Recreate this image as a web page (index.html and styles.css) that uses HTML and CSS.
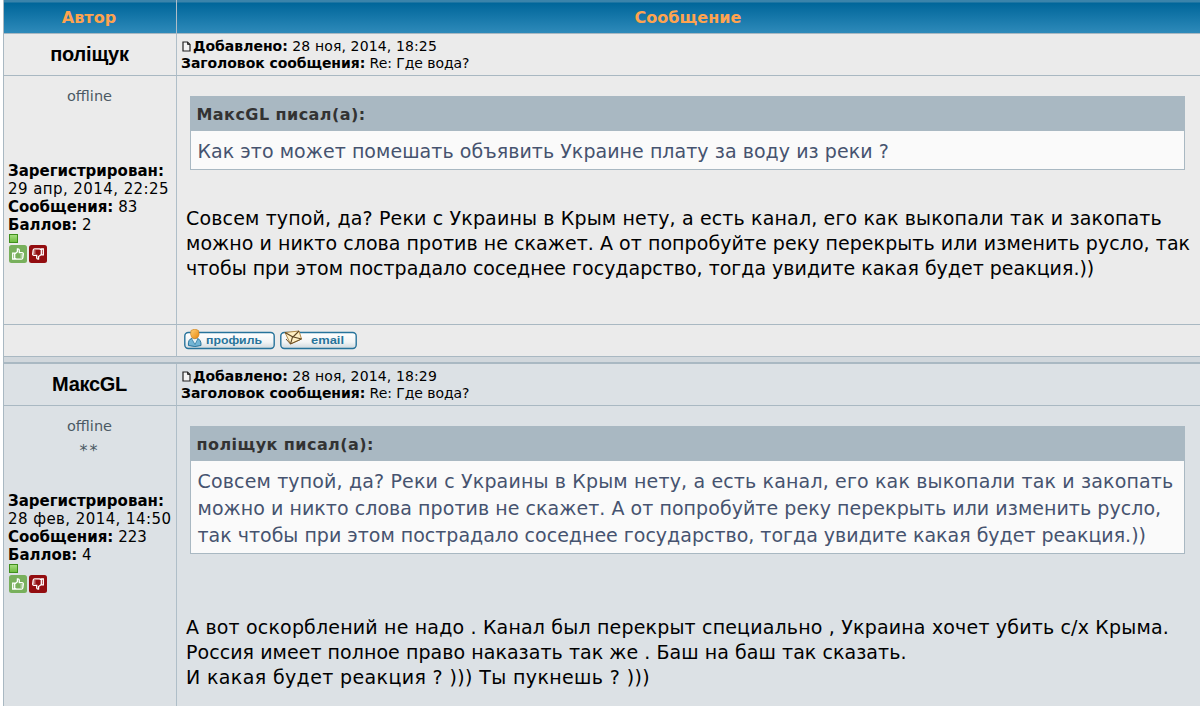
FILE: index.html
```html
<!DOCTYPE html>
<html lang="ru">
<head>
<meta charset="utf-8">
<title>Где вода?</title>
<link rel="stylesheet" href="styles.css">
</head>
<body>
<svg class="symbols" aria-hidden="true">
  <defs>
    <linearGradient id="btn" x1="0" y1="0" x2="0" y2="1"><stop offset="0" stop-color="#fff"/><stop offset=".6" stop-color="#f2f4f5"/><stop offset="1" stop-color="#cfd8dd"/></linearGradient>
    <linearGradient id="gold" x1="0" y1="0" x2="1" y2="1"><stop offset="0" stop-color="#ffd37a"/><stop offset="1" stop-color="#e8860c"/></linearGradient>
  </defs>
  <symbol id="page" viewBox="0 0 9 11"><path d="M1 1h4.500L8 3.500V10H1z" fill="#f4f4f4" stroke="#222" stroke-width="1.200"/><path d="M5.500 1v2.500H8" fill="none" stroke="#222" stroke-width=".9"/></symbol>
  <symbol id="up" viewBox="0 0 18 18"><rect width="18" height="18" rx="2.500" fill="#78b05c"/><path d="M3.700 8.200h2v5.800h-2zM5.700 9l2.700-2.300V4q1.900-.4 1.900 1.500v2.200h2.800q1.400.1 1.200 1.400l-.5 3.900q-.2 1.200-1.400 1.200H7.500l-1.800-.8" fill="none" stroke="#fff" stroke-width="1.300"/><path d="M11.500 10h2.500M11.500 12h2.200" stroke="#fff" stroke-width=".8"/></symbol>
  <symbol id="down" viewBox="0 0 18 18"><rect width="18" height="18" rx="2.500" fill="#930d10"/><path d="M3.700 4h2v5.800h-2zM5.700 9.500l2.700 2V14q1.900.4 1.900-1.500v-2.200h2.800q1.400-.1 1.200-1.400l-.5-3.900q-.2-1.200-1.400-1.200H7.500l-1.800.8" transform="translate(18) scale(-1 1)" fill="none" stroke="#fff" stroke-width="1.300"/><path d="M4 8h2.500M4.300 6h2.200" stroke="#fff" stroke-width=".8"/></symbol>
</svg>
<div class="topic">
  <div class="head author-head"><b>Автор</b></div>
  <div class="head message-head"><b>Сообщение</b></div>

  <div class="name a">поліщук</div>
  <div class="subject a">
    <div><svg class="page"><use href="#page"/></svg><b>Добавлено:</b> <span class="date">28 ноя, 2014, 18:25</span></div>
    <div class="title"><b>Заголовок сообщения:</b> <span>Re: Где вода?</span></div>
  </div>
  <div class="profile a">
    <div class="status"><div>offline</div></div>
    <div class="details">
      <div><b>Зарегистрирован:</b></div>
      <div class="when">29 апр, 2014, 22:25</div>
      <div><b>Сообщения:</b> 83</div>
      <div><b>Баллов:</b> 2</div>
    </div>
    <div class="rank"></div>
    <div class="votes"><svg><use href="#up"/></svg><svg><use href="#down"/></svg></div>
  </div>
  <div class="post a">
    <div class="quote">
      <div class="cite"><b>МаксGL писал(а):</b></div>
      <div class="quoted"><div class="tight">Как это может помешать объявить Украине плату за воду из реки ?</div></div>
    </div>
    <div class="text">
      <div class="loose">Совсем тупой, да? Реки с Украины в Крым нету, а есть канал, его как выкопали так и закопать</div>
      <div class="tight">можно и никто слова против не скажет. А от попробуйте реку перекрыть или изменить русло, так</div>
      <div>чтобы при этом пострадало соседнее государство, тогда увидите какая будет реакция.))</div>
    </div>
  </div>
  <div class="foot a"></div>
  <div class="foot a buttons">
    <svg width="92" height="22" viewBox="0 0 92 22">
      <rect x=".8" y="3.500" width="89.400" height="16" rx="3.500" fill="url(#btn)" stroke="#27739b" stroke-width="1.400"/>
      <path d="M4.500 16.500q-1-6 4-7.500h4q5 1.500 4.500 7.500-6 2-12.500 0z" fill="#73b5d5" stroke="#27739b"/><path d="M7.500 9.500l3.500 6 3-6" fill="#e6f2f7" stroke="#27739b" stroke-width=".7"/>
      <path d="M7 1.500q4-3 7.500 0 1.500 5-.7 7-3 2.500-6 0-2-3-.8-7z" fill="url(#gold)" stroke="#c77b1a" stroke-width=".6"/>
      <text x="22" y="15" textLength="56" lengthAdjust="spacingAndGlyphs">профиль</text>
    </svg>
    <svg width="78" height="22" viewBox="0 0 78 22">
      <rect x=".8" y="3.500" width="75.400" height="16" rx="3.500" fill="url(#btn)" stroke="#27739b" stroke-width="1.400"/>
      <path d="M5 3.500l14-1.500 2.500 8-11 5z" fill="#ffefc4" stroke="#b18a4b"/><path d="M5 3.500l8 4.500 6-6M10.500 15l2-7M21.500 10l-8-2" fill="none" stroke="#5e4523" stroke-width="1.100"/><path d="M6 10l4.500 5 11-5" fill="none" stroke="#6f5126"/>
      <text x="31" y="15" textLength="33" lengthAdjust="spacingAndGlyphs">email</text>
    </svg>
  </div>
  <div class="spacer"></div>

  <div class="name b">МаксGL</div>
  <div class="subject b">
    <div><svg class="page"><use href="#page"/></svg><b>Добавлено:</b> <span class="date">28 ноя, 2014, 18:29</span></div>
    <div class="title"><b>Заголовок сообщения:</b> <span>Re: Где вода?</span></div>
  </div>
  <div class="profile b">
    <div class="status"><div>offline</div><div class="stars">**</div></div>
    <div class="details">
      <div><b>Зарегистрирован:</b></div>
      <div class="when">28 фев, 2014, 14:50</div>
      <div><b>Сообщения:</b> 223</div>
      <div><b>Баллов:</b> 4</div>
    </div>
    <div class="rank"></div>
    <div class="votes"><svg><use href="#up"/></svg><svg><use href="#down"/></svg></div>
  </div>
  <div class="post b">
    <div class="quote">
      <div class="cite"><b>поліщук писал(а):</b></div>
      <div class="quoted">
        <div class="loose">Совсем тупой, да? Реки с Украины в Крым нету, а есть канал, его как выкопали так и закопать</div>
        <div class="tight">можно и никто слова против не скажет. А от попробуйте реку перекрыть или изменить русло,</div>
        <div>так чтобы при этом пострадало соседнее государство, тогда увидите какая будет реакция.))</div>
      </div>
    </div>
    <div class="text second">
      <div class="looser">А вот оскорблений не надо . Канал был перекрыт специально , Украина хочет убить с/х Крыма.</div>
      <div class="tight">Россия имеет полное право наказать так же . Баш на баш так сказать.</div>
      <div class="loosest">И какая будет реакция ? ))) Ты пукнешь ? )))</div>
    </div>
  </div>
</div>
</body>
</html>
```
FILE: styles.css
```css
* { box-sizing: border-box; }
body { margin: 0; background: #fff; font-family: "DejaVu Sans", Verdana, sans-serif; font-size: 14px; color: #000; height: 706px; overflow: hidden; }
.symbols { display: block; width: 0; height: 0; }
.topic { margin-left: 3px; display: grid; grid-template-columns: 174px 1fr; grid-template-rows: 34px 42px 249px 32px 7px 42px 310px; white-space: nowrap; }
.topic > div { border-bottom: 1px solid #a9b8c2; min-width: 0; }
.author-head, .name, .profile, .foot:not(.buttons) { border-left: 1px solid #a9b8c2; border-right: 1px solid #afbec8; }
.topic > .head { background: linear-gradient(#3b84ab 0, #3b84ab 2px, #00669a 3px, #2e8aba 100%); color: #ffa34f; text-align: center; font-size: 16px; line-height: 35px; letter-spacing: .05px; }
.author-head b { margin-right: 2px; }
.message-head b { margin-right: 1px; }
.topic > .a { background: #ebebeb; }
.topic > .b { background: #dce1e5; }
.name { font: bold 20px/41px "Liberation Sans", Arial, sans-serif; text-align: center; letter-spacing: -.2px; padding-right: 1px; }
.name.b { letter-spacing: -.3px; }
.subject { padding: 4px 4px; line-height: 17px; }
.page { width: 9px; height: 11px; margin: 0 2px 0 1px; vertical-align: -1px; }
.date { letter-spacing: .13px; }
.title { letter-spacing: -.06px; }
.profile { padding: 10px 4px; }
.status { height: 76px; text-align: center; color: #4b5964; font-size: 14.5px; line-height: 20px; padding-right: 1px; }
.stars { line-height: 30px; font-size: 16px; letter-spacing: 2px; }
.details { line-height: 18px; font-size: 15px; }
.when { letter-spacing: .43px; }
.rank { width: 9px; height: 9px; border: 1px solid #3f8f1d; background: linear-gradient(#a5dc80, #6fbd3f); margin: 0 0 2px 1px; }
.votes { display: flex; gap: 2px; padding-left: 1px; }
.votes svg { width: 18px; height: 18px; }
.post { padding: 20px 10px 0 9px; }
.quote { margin: 0 5px 0 4px; }
.cite { background: #a9b8c2; color: #333; font-size: 16px; line-height: 37px; height: 35px; padding-left: 6.5px; letter-spacing: .44px; }
.quoted { background: #fafafa; border: 1px solid #a9b8c2; border-top: 0; color: #46536f; font-size: 19px; line-height: 27px; padding: 7px 6.5px 4px; }
.text { font-size: 19px; line-height: 25px; padding-top: 36px; }
.text.second { padding-top: 61px; }
.tight { letter-spacing: .05px; }
.loose { letter-spacing: .15px; }
.looser { letter-spacing: .175px; }
.loosest { letter-spacing: .37px; }
.buttons { display: flex; gap: 4px; padding: 4px 7px; }
.buttons text { font: bold 11.5px "Liberation Sans", Arial, sans-serif; fill: #27739b; }
.topic > .spacer { grid-column: 1 / -1; background: #d1d7dc; border-left: 1px solid #a9b8c2; border-bottom: 2px solid #a9b8c2; }
```
